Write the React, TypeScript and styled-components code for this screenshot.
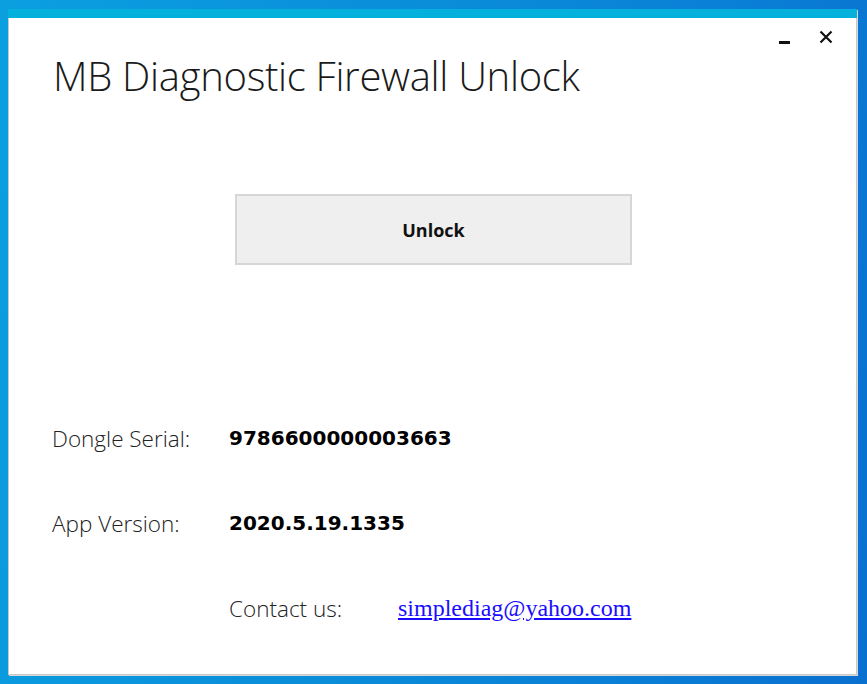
import styled, { createGlobalStyle } from 'styled-components'

const GlobalStyle = createGlobalStyle`
  html, body {
    margin: 0;
    padding: 0;
  }
  body {
    width: 867px;
    height: 684px;
    overflow: hidden;
    font-family: 'Open Sans', 'Noto Sans', sans-serif;
  }
`

const App = () => {
  return (
    <>
      <GlobalStyle />
      <Desktop>
        <Window>
          <TopStrip />
          <Body>
            <TitleRow>
              <Title>MB Diagnostic Firewall Unlock</Title>
              <Controls>
                <Minimize aria-label="minimize" />
                <CloseGlyph aria-label="close">
                  <svg width="14" height="14" viewBox="0 0 14 14">
                    <path d="M1.5 1.5 L12.5 12.5 M12.5 1.5 L1.5 12.5" stroke="#111" strokeWidth="2.2" />
                  </svg>
                </CloseGlyph>
              </Controls>
            </TitleRow>
            <ButtonRow>
              <UnlockButton>Unlock</UnlockButton>
            </ButtonRow>
            <InfoList>
              <InfoRow>
                <Label>Dongle Serial:</Label>
                <Value>9786600000003663</Value>
              </InfoRow>
              <InfoRow>
                <Label>App Version:</Label>
                <Value>2020.5.19.1335</Value>
              </InfoRow>
            </InfoList>
            <ContactRow>
              <ContactLabel>Contact us:</ContactLabel>
              <MailLink href="#">simplediag@yahoo.com</MailLink>
            </ContactRow>
          </Body>
        </Window>
      </Desktop>
    </>
  )
}

export default App

const Desktop = styled.div`
  width: 867px;
  height: 684px;
  box-sizing: border-box;
  padding: 9px 10px 9px 8px;
  background: linear-gradient(100deg, #0b9fe0 0%, #0a8fda 40%, #0a7fd6 75%, #0a70d0 100%);
`

const Window = styled.div`
  display: flex;
  flex-direction: column;
  height: 100%;
  box-sizing: border-box;
  background: #ffffff;
  border: 1px solid #c9c9c9;
  border-top: none;
  box-shadow: 1px 1px 0 #d8d8d8;
`

const TopStrip = styled.div`
  height: 9px;
  margin: 0 -1px;
  background: #04b0dc;
`

const Body = styled.div`
  flex: 1;
  display: flex;
  flex-direction: column;
  padding: 0 0 0 44px;
`

const TitleRow = styled.div`
  display: flex;
  justify-content: space-between;
  align-items: flex-start;
`

const Title = styled.h1`
  margin: 34px 0 0;
  font-family: 'Open Sans', 'Noto Sans', sans-serif;
  font-weight: 300;
  font-size: 40px;
  line-height: 48px;
  color: #1a1a1a;
  letter-spacing: -0.3px;
`

const Controls = styled.div`
  display: flex;
  align-items: center;
  gap: 29px;
  margin: 12px 23px 0 0;
`

const Minimize = styled.span`
  display: block;
  width: 11px;
  height: 3px;
  margin-top: 11px;
  background: #111111;
`

const CloseGlyph = styled.span`
  display: flex;
  width: 14px;
  height: 14px;
`

const ButtonRow = styled.div`
  display: flex;
  margin: 94px 0 0 182px;
`

const UnlockButton = styled.button`
  width: 397px;
  height: 71px;
  box-sizing: border-box;
  background: #efefef;
  border: 2px solid #d6d6d6;
  font-family: 'Open Sans', 'Noto Sans', sans-serif;
  font-weight: 700;
  font-size: 18px;
  color: #111111;
  cursor: pointer;
`

const InfoList = styled.div`
  display: flex;
  flex-direction: column;
  gap: 59px;
  margin: 160px 0 0 -1px;
`

const InfoRow = styled.div`
  display: flex;
  align-items: center;
  height: 26px;
`

const Label = styled.span`
  width: 177px;
  font-family: 'Open Sans', 'Noto Sans', sans-serif;
  font-weight: 300;
  font-size: 22.5px;
  color: #222222;
`

const Value = styled.span`
  font-family: 'DejaVu Sans', 'Open Sans', sans-serif;
  font-weight: 700;
  font-size: 20px;
  color: #000000;
`

const ContactRow = styled.div`
  display: flex;
  align-items: center;
  height: 28px;
  margin: 58px 0 0 176px;
`

const ContactLabel = styled.span`
  width: 169px;
  font-family: 'Open Sans', 'Noto Sans', sans-serif;
  font-weight: 300;
  font-size: 22.5px;
  color: #222222;
`

const MailLink = styled.a`
  font-family: 'Liberation Serif', 'Times New Roman', serif;
  font-size: 24px;
  color: #1a0dff;
  text-decoration: underline;
`
